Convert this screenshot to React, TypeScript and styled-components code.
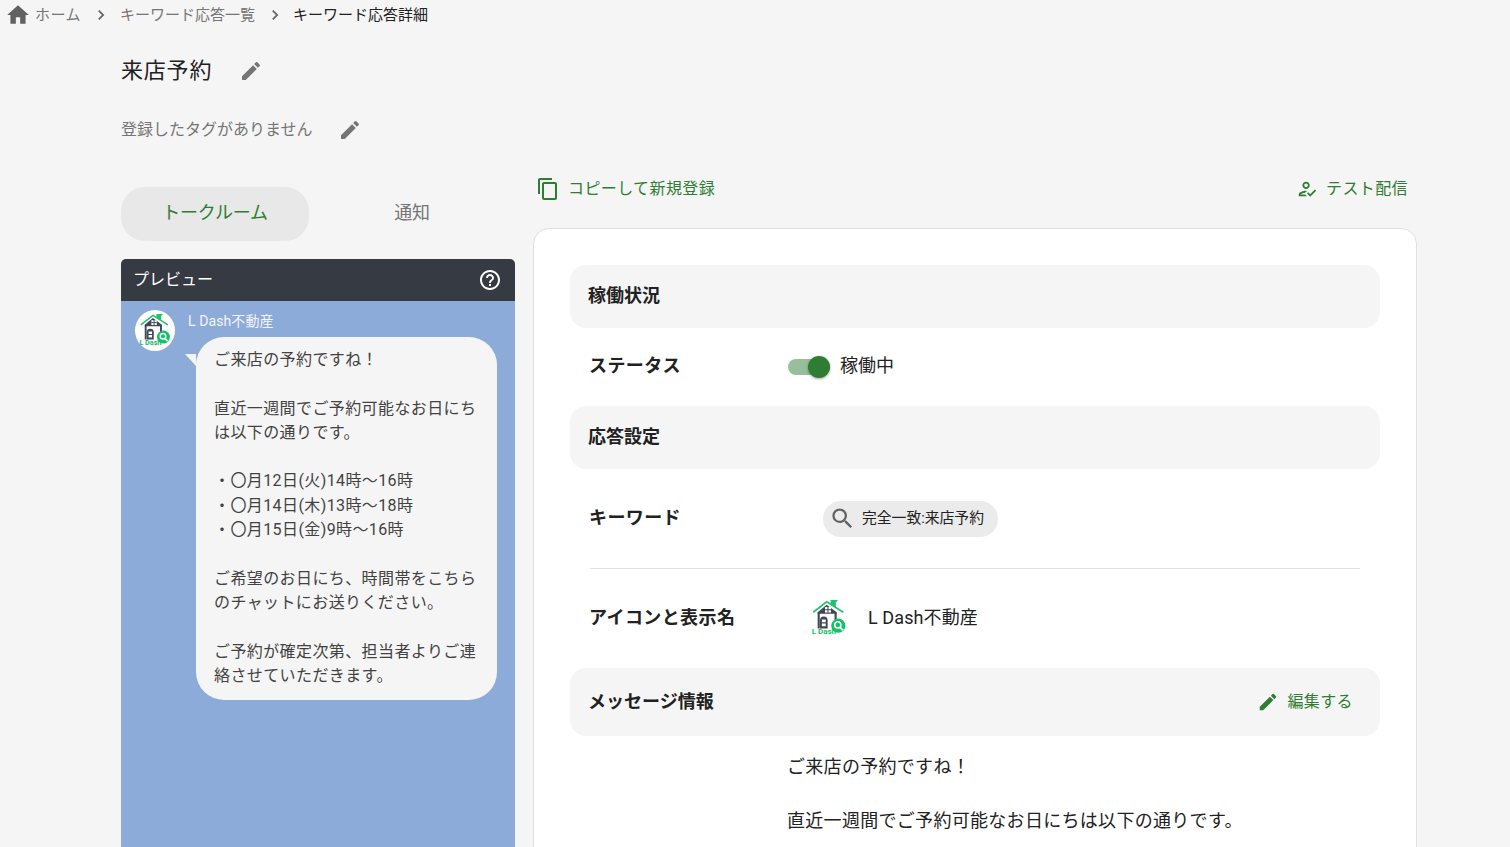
import React from "react";
import styled, { createGlobalStyle } from "styled-components";
import {
  MdHome,
  MdNavigateNext,
  MdEdit,
  MdOutlineContentCopy,
  MdOutlineHowToReg,
  MdHelpOutline,
  MdSearch,
} from "react-icons/md";

const GREEN = "#2e7d32";

const messageLines = [
  "ご来店の予約ですね！",
  "",
  "直近一週間でご予約可能なお日にちは以下の通りです。",
  "",
  "・〇月12日(火)14時～16時",
  "・〇月14日(木)13時～18時",
  "・〇月15日(金)9時～16時",
  "",
  "ご希望のお日にち、時間帯をこちらのチャットにお送りください。",
  "",
  "ご予約が確定次第、担当者よりご連絡させていただきます。",
];

const Logo: React.FC<{ size: number }> = ({ size }) => (
  <svg width={size} height={size} viewBox="0 0 40 40">
    <path d="M21.5 2h7l-2 2.2v4.6l-5-3.4z" fill="#1fc36b" />
    <path d="M5 13.6 17.8 3.6 33.6 13.6" fill="none" stroke="#1fc36b" strokeWidth="1.6" />
    <path d="M9.2 13.5 17.8 6.4 27.3 13.5V15H9.2z" fill="#3f4654" />
    <path d="M10.2 14v15" stroke="#3f4654" strokeWidth="2" fill="none" />
    <path d="M26.3 14v8" stroke="#3f4654" strokeWidth="2" fill="none" />
    <path d="M16.2 8.6h5.7v5.2h-5.7z" fill="#fff" />
    <path d="M19 8.6v5.2M16.2 11.2h5.7" stroke="#3f4654" strokeWidth="1" />
    <path d="M11.4 29V21.2a3.6 3.6 0 0 1 7.3 0V29z" fill="#3f4654" />
    <path d="M13.2 20.5h3.7v2.6h-3.7zM13.2 24.2h3.7v2.6h-3.7z" fill="#fff" />
    <circle cx="28.9" cy="26.4" r="6.8" fill="#14c06a" />
    <circle cx="28.4" cy="25.6" r="2.9" fill="none" stroke="#fff" strokeWidth="1.5" />
    <path d="M30.4 27.8l3 3" stroke="#fff" strokeWidth="1.7" fill="none" />
    <text x="3.6" y="34.6" fontFamily="Roboto, sans-serif" fontSize="7.6" fontWeight="700" fill="#14c06a">
      L Dash
    </text>
  </svg>
);

export default function App() {
  return (
    <>
      <GlobalStyle />
      <Page>
        <Breadcrumbs>
          <HomeIcon />
          <HomeLabel>ホーム</HomeLabel>
          <CrumbSeparator />
          <CrumbLink>キーワード応答一覧</CrumbLink>
          <CrumbSeparator />
          <CrumbCurrent>キーワード応答詳細</CrumbCurrent>
        </Breadcrumbs>

        <Content>
          <TitleRow>
            <Title>来店予約</Title>
            <EditGlyph />
          </TitleRow>
          <TagRow>
            <TagText>登録したタグがありません</TagText>
            <EditGlyph />
          </TagRow>

          <Columns>
            <LeftColumn>
              <Tabs>
                <Tab $active>トークルーム</Tab>
                <Tab>通知</Tab>
              </Tabs>
              <Preview>
                <PreviewHeader>
                  <PreviewTitle>プレビュー</PreviewTitle>
                  <MdHelpOutline size={24} />
                </PreviewHeader>
                <PreviewBody>
                  <Avatar>
                    <Logo size={38} />
                  </Avatar>
                  <ChatColumn>
                    <SenderName>L Dash不動産</SenderName>
                    <Bubble>
                      {messageLines.map((line, i) => (
                        <BubbleLine key={i}>{line}</BubbleLine>
                      ))}
                    </Bubble>
                  </ChatColumn>
                </PreviewBody>
              </Preview>
            </LeftColumn>

            <RightColumn>
              <Actions>
                <ActionLink>
                  <MdOutlineContentCopy size={24} />
                  <ActionText>コピーして新規登録</ActionText>
                </ActionLink>
                <ActionLink>
                  <MdOutlineHowToReg size={22} />
                  <ActionText>テスト配信</ActionText>
                </ActionLink>
              </Actions>
              <Card>
                <SectionHeader>
                  <HeaderText>稼働状況</HeaderText>
                </SectionHeader>
                <StatusRow>
                  <StatusLabel>ステータス</StatusLabel>
                  <Switch>
                    <SwitchThumb />
                  </Switch>
                  <RowValue>稼働中</RowValue>
                </StatusRow>
                <SectionHeader>
                  <HeaderText>応答設定</HeaderText>
                </SectionHeader>
                <KeywordRow>
                  <RowLabel>キーワード</RowLabel>
                  <Chip>
                    <MdSearch size={27} />
                    <ChipText>完全一致:来店予約</ChipText>
                  </Chip>
                </KeywordRow>
                <Divider />
                <IconRow>
                  <RowLabel>アイコンと表示名</RowLabel>
                  <Logo size={42} />
                  <DisplayName>L Dash不動産</DisplayName>
                </IconRow>
                <MessageHeader>
                  <MessageTitle>メッセージ情報</MessageTitle>
                  <EditLink>
                    <MdEdit size={22} />
                    <ActionText>編集する</ActionText>
                  </EditLink>
                </MessageHeader>
                <MessageBody>
                  {messageLines.map((line, i) => (
                    <MessageLine key={i}>{line}</MessageLine>
                  ))}
                </MessageBody>
              </Card>
            </RightColumn>
          </Columns>
        </Content>
      </Page>
    </>
  );
}

const GlobalStyle = createGlobalStyle`
  html, body {
    margin: 0;
    height: 100%;
    overflow: hidden;
    background: #f5f5f5;
    font-family: Roboto, "Noto Sans CJK JP", sans-serif;
  }
  * {
    box-sizing: border-box;
  }
`;

const Page = styled.div`
  height: 100vh;
  overflow: hidden;
  background: #f5f5f5;
`;

const Breadcrumbs = styled.nav`
  display: flex;
  align-items: center;
  height: 30px;
  padding-left: 5px;
  font-size: 15px;
`;

const HomeIcon = styled(MdHome).attrs({ size: 26 })`
  color: #616161;
  margin-right: 4px;
`;

const CrumbLink = styled.span`
  color: #757575;
  margin-bottom: 4px;
`;

const HomeLabel = styled(CrumbLink)`
  letter-spacing: 0.5px;
`;

const CrumbCurrent = styled.span`
  margin-left: -1px;
  margin-bottom: 4px;
  color: #212121;
`;

const CrumbSeparator = styled(MdNavigateNext).attrs({ size: 20 })`
  color: #616161;
  margin: 0 9.5px;
`;

const Content = styled.div`
  padding: 0 93px 0 121px;
`;

const TitleRow = styled.div`
  display: flex;
  align-items: center;
  gap: 27px;
  height: 48px;
  margin-top: 17px;
`;

const Title = styled.h1`
  margin: 0 0 7px;
  font-size: 22px;
  font-weight: 400;
  letter-spacing: 0.8px;
  color: #212121;
`;

const EditGlyph = styled(MdEdit).attrs({ size: 24 })`
  color: #757575;
`;

const TagRow = styled.div`
  display: flex;
  align-items: center;
  gap: 25px;
  height: 32px;
  margin-top: 19px;
`;

const TagText = styled.span`
  margin-bottom: 4px;
  font-size: 16px;
  color: #757575;
`;

const Columns = styled.div`
  display: flex;
  gap: 18px;
  margin-top: 40px;
`;

const LeftColumn = styled.div`
  width: 394px;
  flex: none;
`;

const Tabs = styled.div`
  display: grid;
  grid-template-columns: 188px 206px;
  height: 54px;
  margin-top: 1px;
  margin-bottom: 18px;
`;

const Tab = styled.div<{ $active?: boolean }>`
  display: flex;
  align-items: center;
  justify-content: center;
  padding-bottom: 6px;
  border-radius: 24px;
  font-size: 18px;
  letter-spacing: -0.2px;
  color: ${(p) => (p.$active ? GREEN : "#757575")};
  background: ${(p) => (p.$active ? "#e8e8e8" : "transparent")};
`;

const Preview = styled.section`
  border-radius: 5px 5px 0 0;
  overflow: hidden;
`;

const PreviewHeader = styled.header`
  display: flex;
  align-items: center;
  justify-content: space-between;
  height: 42px;
  padding: 0 13px 0 12px;
  background: #363a42;
  color: #fff;
`;

const PreviewTitle = styled.span`
  margin-bottom: 4px;
  font-size: 16px;
`;

const PreviewBody = styled.div`
  display: flex;
  align-items: flex-start;
  gap: 13px;
  height: 600px;
  padding: 9px 18px 0 14px;
  background: #8cabd9;
`;

const Avatar = styled.div`
  display: flex;
  align-items: center;
  justify-content: center;
  width: 40px;
  height: 41px;
  border-radius: 50%;
  background: #fff;
  flex: none;
`;

const ChatColumn = styled.div`
  flex: 1;
  min-width: 0;
  display: flex;
  flex-direction: column;
`;

const SenderName = styled.div`
  height: 27px;
  font-size: 14px;
  letter-spacing: 0.1px;
  color: #f5f5f5;
`;

const Bubble = styled.div`
  position: relative;
  margin-left: 8px;
  padding: 11px 18px 12px 18px;
  border-radius: 28px;
  background: #f5f5f5;
  color: #424242;
  font-size: 16px;
  line-height: 24.3px;
  letter-spacing: 0.4px;

  &::before {
    content: "";
    position: absolute;
    left: -11px;
    top: 17px;
    border-top: 12px solid #f5f5f5;
    border-left: 11px solid transparent;
  }
`;

const BubbleLine = styled.div`
  min-height: 24.3px;
  word-break: break-all;
`;

const RightColumn = styled.div`
  width: 884px;
  flex: none;
`;

const Actions = styled.div`
  display: flex;
  align-items: center;
  justify-content: space-between;
  height: 40px;
  margin-top: -17px;
  margin-bottom: 19px;
  padding: 0 9px 0 3px;
`;

const ActionLink = styled.div`
  display: flex;
  align-items: center;
  gap: 8px;
  color: ${GREEN};
  font-size: 16px;
`;

const ActionText = styled.span`
  margin-bottom: 5px;
  letter-spacing: 0.4px;
`;

const Card = styled.div`
  height: 700px;
  padding: 36px 36px 0;
  border: 1px solid #e0e0e0;
  border-radius: 16px;
  background: #fff;
`;

const SectionHeader = styled.div`
  display: flex;
  align-items: center;
  height: 63px;
  padding-left: 18px;
  border-radius: 16px;
  background: #f5f5f5;
  font-size: 18px;
  font-weight: 700;
  color: #212121;
`;

const HeaderText = styled.span`
  margin-bottom: 6px;
`;

const MessageHeader = styled(SectionHeader)`
  justify-content: space-between;
  height: 68px;
  padding-right: 27px;
`;

const MessageTitle = styled.span`
  margin-bottom: 4px;
`;

const EditLink = styled.div`
  display: flex;
  align-items: center;
  gap: 8px;
  color: ${GREEN};
  font-size: 16px;
  font-weight: 400;
`;

const Row = styled.div`
  display: flex;
  align-items: center;
  padding-left: 19px;
`;

const StatusRow = styled(Row)`
  height: 78px;
`;

const KeywordRow = styled(Row)`
  height: 99px;
`;

const IconRow = styled(Row)`
  height: 99px;
`;

const RowLabel = styled.div`
  width: 219px;
  flex: none;
  margin-bottom: 5px;
  font-size: 18px;
  font-weight: 700;
  letter-spacing: 0.4px;
  color: #212121;
`;

const StatusLabel = styled(RowLabel)`
  margin-bottom: 7px;
`;

const Switch = styled.div`
  position: relative;
  width: 42px;
  height: 16px;
  margin-left: -20px;
  border-radius: 8px;
  background: #97c09a;
`;

const SwitchThumb = styled.span`
  position: absolute;
  right: 0;
  top: -3px;
  width: 22px;
  height: 22px;
  border-radius: 50%;
  background: ${GREEN};
  box-shadow: 0 1px 3px rgba(0, 0, 0, 0.35);
`;

const RowValue = styled.span`
  margin-left: 10px;
  margin-bottom: 7px;
  font-size: 18px;
  color: #212121;
`;

const Chip = styled.div`
  display: flex;
  align-items: center;
  gap: 6px;
  width: 175px;
  height: 36px;
  padding-left: 6px;
  margin-left: 15px;
  border-radius: 18px;
  background: #ebebeb;
  color: #212121;

  svg {
    color: #616161;
  }
`;

const ChipText = styled.span`
  margin-bottom: 4px;
  font-size: 14.8px;
`;

const Divider = styled.hr`
  margin: 0 20px;
  border: 0;
  border-top: 1px solid #e0e0e0;
`;

const DisplayName = styled.span`
  margin-left: 18px;
  margin-bottom: 6px;
  font-size: 18px;
  letter-spacing: 0.1px;
  color: #212121;
`;

const MessageBody = styled.div`
  padding: 17px 0 0 217px;
`;

const MessageLine = styled.div`
  min-height: 27px;
  font-size: 18px;
  line-height: 27px;
  letter-spacing: 0.3px;
  color: #212121;
`;
